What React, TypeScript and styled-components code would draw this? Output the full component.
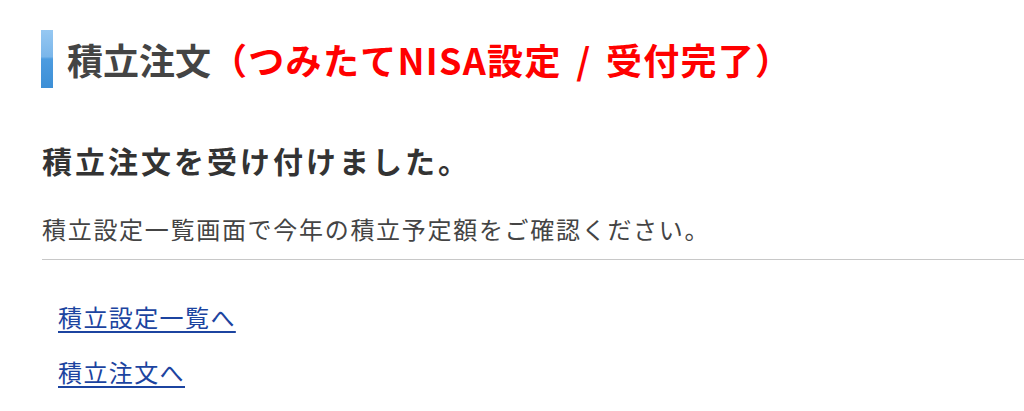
import React from "react";
import styled, { createGlobalStyle } from "styled-components";

const Global = createGlobalStyle`
  html, body { margin: 0; padding: 0; background: #ffffff; }
  body { font-family: "Noto Sans CJK JP", "Noto Sans", sans-serif; }
`;

const Page = styled.div`
  padding: 30px 0 0 42px;
  display: flex;
  flex-direction: column;
`;

const PageTitle = styled.h1`
  margin: 0 0 0 -1px;
  display: flex;
  align-items: center;
  height: 58px;
  font-size: 36px;
  font-weight: 700;
  color: #444444;
  line-height: 58px;
  white-space: nowrap;
`;

const TitleBar = styled.span`
  width: 12px;
  height: 58px;
  margin-right: 14px;
  flex-shrink: 0;
  background: linear-gradient(
    to bottom,
    #96c8f2 0%,
    #7ab6ea 46%,
    #4c9ce0 50%,
    #3d8fd6 100%
  );
`;

const Accent = styled.span`
  color: #ff0000;
  letter-spacing: 1.3px;
  word-spacing: 5px;
`;

const Lead = styled.h2`
  margin: 52px 0 0 0;
  font-size: 30px;
  line-height: 40px;
  font-weight: 700;
  color: #333333;
  letter-spacing: 3px;
`;

const Note = styled.p`
  margin: 32px 0 0 0;
  padding-bottom: 13px;
  border-bottom: 1px solid #c8c8c8;
  font-size: 24px;
  line-height: 34px;
  color: #444444;
  letter-spacing: 1.7px;
`;

const LinkList = styled.ul`
  list-style: none;
  margin: 40px 0 0 0;
  padding: 0 0 0 16px;
  display: flex;
  flex-direction: column;
  gap: 21px;
`;

const LinkItem = styled.li`
  font-size: 24px;
  line-height: 34px;
  letter-spacing: 1.4px;
`;

const NavLink = styled.a`
  color: #1c44a0;
  text-decoration: underline;
  text-underline-offset: 4px;
`;

export default function App() {
  return (
    <>
      <Global />
      <Page>
        <PageTitle>
          <TitleBar />
          積立注文<Accent>（つみたてNISA設定 / 受付完了）</Accent>
        </PageTitle>
        <Lead>積立注文を受け付けました。</Lead>
        <Note>積立設定一覧画面で今年の積立予定額をご確認ください。</Note>
        <LinkList>
          <LinkItem>
            <NavLink href="#">積立設定一覧へ</NavLink>
          </LinkItem>
          <LinkItem>
            <NavLink href="#">積立注文へ</NavLink>
          </LinkItem>
        </LinkList>
      </Page>
    </>
  );
}
